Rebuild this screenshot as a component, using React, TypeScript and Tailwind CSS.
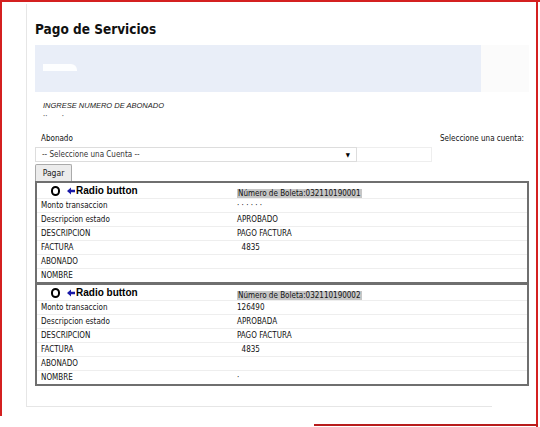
const rowFont = { fontFamily: '"DejaVu Sans Condensed", "Liberation Sans", sans-serif' };

type Boleta = {
  numero: string;
  monto: string;
  estado: string;
  descripcion: string;
  factura: string;
  abonado: string;
  nombre: string;
};

const boletas: Boleta[] = [
  { numero: "032110190001", monto: "· · · · · ·", estado: "APROBADO", descripcion: "PAGO FACTURA", factura: "4835", abonado: "", nombre: "" },
  { numero: "032110190002", monto: "126490", estado: "APROBADA", descripcion: "PAGO FACTURA", factura: "4835", abonado: "", nombre: "·" },
];

function Row({ label, value }: { label: string; value: string }) {
  return (
    <div className="flex h-[14px] items-center border-t border-[#eeeeee] text-[8px] text-[#111]">
      <div className="w-[200px] pl-[4px]">{label}</div>
      <div className="flex-1">{value}</div>
    </div>
  );
}

function BoletaTable({ b, first }: { b: Boleta; first: boolean }) {
  return (
    <div className={first ? "border-2 border-[#6f6f6f] bg-white" : "border-2 border-t-[1px] border-[#6f6f6f] bg-white"} style={rowFont}>
      <div className="flex h-[15px] items-center">
        <div className="flex w-[200px] items-center pl-[14px]">
          <span className="mr-[7px] inline-block h-[10px] w-[9px] rounded-full border-[2.5px] border-black" />
          <svg width="8" height="8" viewBox="0 0 8 8" className="mr-[1px]">
            <path d="M0 4 L4 0.5 L4 2.8 L8 2.8 L8 5.2 L4 5.2 L4 7.5 Z" fill="#1a1aa8" />
          </svg>
          <span className="text-[10px] font-bold text-black" style={{ fontFamily: '"Liberation Sans", Arial, sans-serif' }}>
            Radio button
          </span>
        </div>
        <div className="flex-1">
          <span className="bg-[#c6c6c6] px-[1px] text-[8px] text-[#111]">Número de Boleta:{b.numero}</span>
        </div>
      </div>
      <Row label="Monto transaccion" value={b.monto} />
      <Row label="Descripcion estado" value={b.estado} />
      <Row label="DESCRIPCION" value={b.descripcion} />
      <Row label="FACTURA" value={"\u00a0\u00a0" + b.factura} />
      <Row label="ABONADO" value={b.abonado} />
      <Row label="NOMBRE" value={b.nombre} />
    </div>
  );
}

export default function App() {
  return (
    <div className="relative h-[427px] w-[540px] overflow-hidden bg-white">
      <div className="ml-[26px] mt-[4px] h-[403px] w-[466px] border-l border-b border-[#e6e6e6]">
        <div className="w-[502px] pl-[8px]">
          <h1
            className="pt-[15px] text-[13.5px] font-bold leading-[20px] text-[#111]"
            style={{ fontFamily: '"DejaVu Sans Condensed", "Liberation Sans", sans-serif' }}
          >
            Pago de Servicios
          </h1>
          <div className="mt-[6px] flex h-[47px]">
            <div className="w-[446px] bg-[#e9eef8]">
              <div className="ml-[8px] mt-[19px] h-[7px] w-[34px] rounded-tr-[6px] bg-white opacity-90" />
            </div>
            <div className="flex-1 bg-[#fbfbfb]" />
          </div>
          <div
            className="mt-[8px] pl-[8px] text-[7.5px] italic text-[#222]"
            style={{ fontFamily: '"Liberation Sans", Arial, sans-serif' }}
          >
            INGRESE NUMERO DE ABONADO
          </div>
          <div className="pl-[8px] text-[8px] leading-[10px] text-[#666]">·· &nbsp;&nbsp;&nbsp;&nbsp;&nbsp;&nbsp;·</div>
          <div className="mt-[12px] flex items-center text-[8px] text-[#111]" style={rowFont}>
            <div className="w-[405px] pl-[6px]">Abonado</div>
            <div>Seleccione una cuenta:</div>
          </div>
          <div className="mt-[2px] flex">
            <div
              className="flex h-[15px] w-[322px] items-center justify-between border border-[#dddddd] bg-white pl-[6px] pr-[6px] text-[8px] text-[#333]"
              style={rowFont}
            >
              <span>-- Seleccione una Cuenta --</span>
              <span className="text-[6px] text-black">▼</span>
            </div>
            <div className="h-[15px] w-[75px] border-y border-r border-[#eeeeee]" />
          </div>
          <button
            className="mt-[2px] block h-[17px] w-[37px] rounded-t-[2px] border border-b-0 border-[#aaaaaa] bg-[#ececec] text-[8.5px] text-[#222]"
            style={rowFont}
          >
            Pagar
          </button>
          <div className="w-[494px]">
            <BoletaTable b={boletas[0]} first />
            <BoletaTable b={boletas[1]} first={false} />
          </div>
        </div>
      </div>
      <div className="pointer-events-none absolute inset-x-0 top-0 h-[2px] bg-[#d42020]" />
      <div className="pointer-events-none absolute left-0 top-0 h-[416px] w-[2px] bg-[#d42020]" />
      <div className="pointer-events-none absolute right-[2px] top-0 h-[427px] w-[2px] bg-[#d42020]" />
      <div className="pointer-events-none absolute bottom-[1px] right-[2px] h-[2px] w-[224px] bg-[#b81c1c]" />
    </div>
  );
}
